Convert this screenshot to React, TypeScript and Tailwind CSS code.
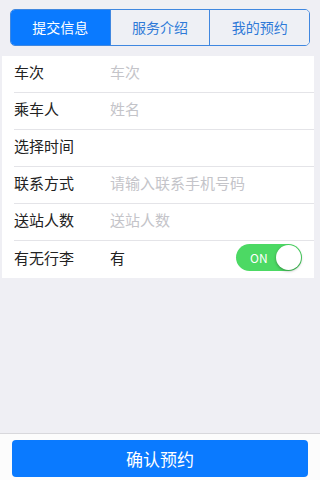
import { useState } from 'react';

const rows = [
    { label: '车次', placeholder: '车次' },
    { label: '乘车人', placeholder: '姓名' },
    { label: '选择时间', placeholder: '' },
    { label: '联系方式', placeholder: '请输入联系手机号码' },
    { label: '送站人数', placeholder: '送站人数' },
];

const tabs = ['提交信息', '服务介绍', '我的预约'];

function Toggle({ on, setOn }: { readonly on: boolean; readonly setOn: (on: boolean) => void }) {
    return (
        <button
            onClick={() => setOn(!on)}
            className={`relative w-[66px] h-[27px] rounded-full ${on ? 'bg-[#4cd964]' : 'bg-[#e5e5ea]'}`}
        >
            <span className="absolute left-[14px] top-[5px] text-[12px] leading-[17px] text-white">ON</span>
            <span
                className={`absolute top-[1px] w-[25px] h-[25px] rounded-full bg-white shadow-[0_1px_3px_rgba(0,0,0,0.35)] ${on ? 'right-[1px]' : 'left-[1px]'}`}
            />
        </button>
    );
}

export default function App() {
    const [tab, setTab] = useState(0);
    const [luggage, setLuggage] = useState(true);

    return (
        <div
            className="h-[480px] w-[320px] flex flex-col bg-[#efeff4] text-[#222]"
            style={{ fontFamily: '"Noto Sans CJK SC", "Noto Sans", sans-serif' }}
        >
            <div className="px-[10px] pt-[9px]">
                <div className="flex h-[37px] rounded-[5px] border border-[#3f87e0] overflow-hidden">
                    {tabs.map((t, i) => (
                        <button
                            key={t}
                            onClick={() => setTab(i)}
                            className={`flex-1 text-[14px] ${i > 0 ? 'border-l border-[#3f87e0]' : ''} ${
                                tab === i ? 'bg-[#0a7aff] text-white' : 'bg-[#eef0f5] text-[#2f7ad8]'
                            }`}
                        >
                            {t}
                        </button>
                    ))}
                </div>
            </div>

            <div className="mt-[10px] ml-[2px] mr-[6px] bg-white">
                {rows.map((row) => (
                    <div key={row.label} className="pl-[12px]">
                        <div className="flex items-center h-[37px] border-b border-[#e4e4e8] pb-[3px]">
                            <span className="w-[96px] text-[15px]">{row.label}</span>
                            <span className="text-[15px] text-[#c4c4c9]">{row.placeholder}</span>
                        </div>
                    </div>
                ))}
                <div className="pl-[12px]">
                    <div className="flex items-center h-[37px] pr-[12px]">
                        <span className="w-[96px] text-[15px] pb-[3px]">有无行李</span>
                        <span className="text-[15px] pb-[3px]">{luggage ? '有' : '无'}</span>
                        <span className="ml-auto">
                            <Toggle on={luggage} setOn={setLuggage} />
                        </span>
                    </div>
                </div>
            </div>

            <div className="flex-1" />

            <div className="h-[47px] border-t border-[#d8d8dc] bg-[#fcfcfc] px-[12px] pt-[6px]">
                <button className="w-full h-[37px] rounded-[4px] bg-[#0a7aff] text-white text-[17px]">确认预约</button>
            </div>
        </div>
    );
}
